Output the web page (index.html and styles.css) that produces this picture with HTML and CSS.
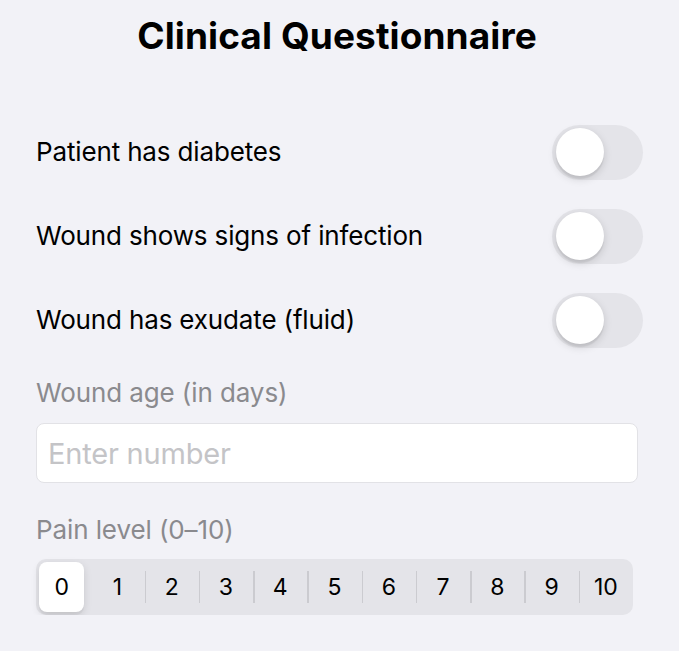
FILE: index.html
```html
<!DOCTYPE html>
<html lang="en">
<head>
<meta charset="utf-8">
<title>Clinical Questionnaire</title>
<link rel="stylesheet" href="styles.css">
</head>
<body>
<main class="page">
  <h1 class="title">Clinical Questionnaire</h1>
  <section class="toggles">
    <div class="row">
      <span class="row-label">Patient has diabetes</span>
      <span class="switch"><span class="knob"></span></span>
    </div>
    <div class="row">
      <span class="row-label">Wound shows signs of infection</span>
      <span class="switch"><span class="knob"></span></span>
    </div>
    <div class="row">
      <span class="row-label">Wound has exudate (fluid)</span>
      <span class="switch"><span class="knob"></span></span>
    </div>
  </section>
  <label class="field-label age-label" for="age">Wound age (in days)</label>
  <input id="age" class="text-input" type="text" placeholder="Enter number">
  <div class="field-label pain-label">Pain level (0–10)</div>
  <div class="segmented">
    <span class="seg selected">0</span>
    <span class="seg">1</span>
    <span class="seg div">2</span>
    <span class="seg div">3</span>
    <span class="seg div">4</span>
    <span class="seg div">5</span>
    <span class="seg div">6</span>
    <span class="seg div">7</span>
    <span class="seg div">8</span>
    <span class="seg div">9</span>
    <span class="seg div">10</span>
  </div>
</main>
</body>
</html>
```

FILE: styles.css
```css
html, body {
  margin: 0;
  padding: 0;
  background: #f2f2f7;
}
body {
  font-family: Inter, "Noto Sans", "Liberation Sans", sans-serif;
  color: #000;
  -webkit-font-smoothing: antialiased;
}
.page {
  display: flex;
  flex-direction: column;
  padding: 0 36px 0 36px;
}
.title {
  margin: 14px 5px 0 0;
  font-size: 37px;
  line-height: 44px;
  font-weight: 700;
  text-align: center;
  letter-spacing: 0.1px;
}
.toggles {
  margin-top: 52px;
  display: flex;
  flex-direction: column;
}
.row {
  height: 84px;
  display: flex;
  align-items: center;
  justify-content: space-between;
}
.row-label {
  font-size: 26px;
  line-height: 30px;
  letter-spacing: -0.15px;
}
.switch {
  width: 91px;
  height: 55px;
  border-radius: 28px;
  background: #e4e4e9;
  display: flex;
  align-items: center;
  padding: 0 3.5px;
  box-sizing: border-box;
}
.knob {
  width: 48px;
  height: 48px;
  border-radius: 50%;
  background: #fff;
  box-shadow: 0 3px 8px rgba(0, 0, 0, 0.15), 0 3px 1px rgba(0, 0, 0, 0.06);
}
.field-label {
  font-size: 26px;
  line-height: 30px;
  color: #8a8a8e;
  letter-spacing: -0.1px;
}
.age-label {
  margin-top: 16px;
}
.text-input {
  margin: 15px 5px 0 0;
  height: 60px;
  box-sizing: border-box;
  border: 1px solid #e2e2e6;
  border-radius: 8px;
  background: #fff;
  padding: 0 11px;
  font-family: inherit;
  font-size: 29px;
  letter-spacing: -0.2px;
  color: #000;
  outline: none;
}
.text-input::placeholder {
  color: #c4c4c7;
}
.pain-label {
  margin-top: 32px;
}
.segmented {
  margin: 14px 10px 0 0;
  height: 56px;
  border-radius: 10px;
  background: #e4e4e9;
  display: grid;
  grid-template-columns: repeat(11, 1fr);
  align-items: center;
}
.seg {
  position: relative;
  height: 100%;
  display: flex;
  align-items: center;
  justify-content: center;
  font-size: 23px;
  color: #000;
}
.seg.div::before {
  content: "";
  position: absolute;
  left: 0;
  top: 12px;
  bottom: 12px;
  width: 1.5px;
  background: #cbcbd0;
}
.seg.selected {
  height: 50px;
  margin: 0 6px 0 3px;
  background: #fff;
  border-radius: 8px;
  box-shadow: 0 3px 8px rgba(0, 0, 0, 0.12), 0 3px 1px rgba(0, 0, 0, 0.04);
}
```
